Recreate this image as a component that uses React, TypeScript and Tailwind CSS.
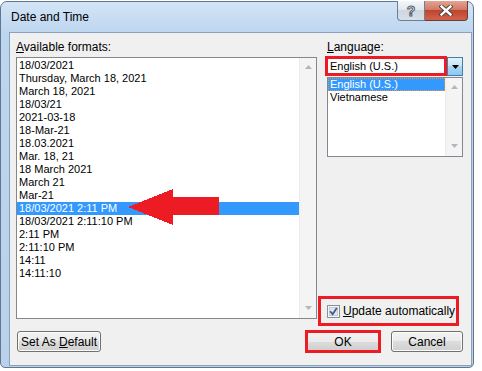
import React from "react";

const formats = [
  "18/03/2021",
  "Thursday, March 18, 2021",
  "March 18, 2021",
  "18/03/21",
  "2021-03-18",
  "18-Mar-21",
  "18.03.2021",
  "Mar. 18, 21",
  "18 March 2021",
  "March 21",
  "Mar-21",
  "18/03/2021 2:11 PM",
  "18/03/2021 2:11:10 PM",
  "2:11 PM",
  "2:11:10 PM",
  "14:11",
  "14:11:10",
];

function ScrollBar({ up, down }: { up: string; down: string }) {
  return (
    <div className="w-[17px] h-full bg-[#f4f4f4] border-l border-[#ececec] flex flex-col items-center justify-between">
      <div className={up}>
        <svg width="7" height="4" viewBox="0 0 7 4">
          <polygon points="0,4 7,4 3.5,0" fill="#b6b6b6" />
        </svg>
      </div>
      <div className={down}>
        <svg width="7" height="4" viewBox="0 0 7 4">
          <polygon points="0,0 7,0 3.5,4" fill="#b6b6b6" />
        </svg>
      </div>
    </div>
  );
}

function Btn({ children, w }: { children: React.ReactNode; w: string }) {
  return (
    <div
      className={`${w} h-[21px] rounded-[3px] border border-[#707070] bg-[linear-gradient(#f2f2f2,#ebebeb_50%,#dddddd_50%,#cfcfcf)] shadow-[inset_0_0_0_1px_#fbfbfb] flex items-center justify-center text-[12px] text-black`}
    >
      <span className="whitespace-pre">{children}</span>
    </div>
  );
}

export default function App() {
  return (
    <div className="w-[482px] h-[371px] bg-white pt-[1px] font-['Liberation_Sans',Arial,sans-serif] overflow-hidden">
      <div className="w-[474px] h-[367px] rounded-t-[7px] rounded-b-[5px] border border-[#62768e] bg-[linear-gradient(#d3e5f7,#bdd6ef_30px,#b9d1ea)] flex flex-col">
        {/* title bar */}
        <div className="h-[30px] flex items-start">
          <div className="pl-[10px] pt-[8px] text-[12px] leading-[15px] text-black">Date and Time</div>
          <div className="ml-auto mr-[5px] -mt-[1px] flex h-[20px]">
            <div className="w-[28px] h-full border border-[#6d7f94] border-t-0 rounded-bl-[4px] bg-[linear-gradient(#f4f7fa,#dfe6ee_50%,#cdd6e1_50%,#d8e0ea)] flex items-center justify-center">
              <span className="text-[14px] font-bold leading-none text-[#f4f4f4] [-webkit-text-stroke:1px_#59626c]">?</span>
            </div>
            <div className="w-[43px] h-full border border-[#6d3a34] border-t-0 border-l-0 rounded-br-[4px] bg-[linear-gradient(#e6a292,#d27a66_45%,#c0452f_50%,#d0624c)] flex items-center justify-center">
              <svg width="14" height="11" viewBox="0 0 14 11">
                <path d="M2.5 1.5 L11.5 9.5 M11.5 1.5 L2.5 9.5" stroke="#3c3c3c" strokeWidth="4.2" strokeLinecap="square" />
                <path d="M2.5 1.5 L11.5 9.5 M11.5 1.5 L2.5 9.5" stroke="#ffffff" strokeWidth="2.4" strokeLinecap="square" />
              </svg>
            </div>
          </div>
        </div>

        {/* client area */}
        <div className="ml-[8px] mr-[1px] mb-[1px] flex-1 border border-[#8ca1b9] bg-[#f0f0f0] flex flex-col text-black">
          <div className="h-[293px] pt-[7px] pl-[6px] flex">
            {/* left column */}
            <div className="w-[301px] flex flex-col">
              <div className="h-[14px] text-[12px] leading-[14px]">
                <span className="underline">A</span>vailable formats:
              </div>
              <div className="relative mt-[3px] h-[262px] border border-[#828790] bg-white flex">
                <div className="flex-1 pt-[1px] text-[11px]">
                  {formats.map((f, i) => (
                    <div
                      key={f}
                      className={`h-[13px] leading-[13px] pl-[2px] whitespace-nowrap ${i === 11 ? "bg-[#3399ff] text-white" : ""}`}
                    >
                      {f}
                    </div>
                  ))}
                </div>
                <ScrollBar up="mt-[7px]" down="mb-[8px]" />
                <svg className="absolute left-[111px] top-[131px]" width="92" height="37" viewBox="0 0 92 37" shapeRendering="crispEdges">
                  <polygon points="0,18 45,0 45,8 91,8 91,26 45,26 45,36" fill="#ed1c24" />
                </svg>
              </div>
            </div>

            {/* right column */}
            <div className="ml-[10px] w-[136px] flex flex-col">
              <div className="h-[14px] text-[12px] leading-[14px]">
                <span className="underline">L</span>anguage:
              </div>
              <div className="mt-[2px] -ml-[2px] flex h-[20px]">
                <div className="w-[123px] h-[20px] border-[3px] border-[#ed1c24] bg-white text-[11px] leading-[14px] pl-[2px]">
                  English (U.S.)
                </div>
                <div className="mt-[1px] w-[16px] h-[19px] border border-[#3c7fb1] bg-[linear-gradient(#e3f2fc,#c4e3f8_50%,#a9d6f5_50%,#8ec9ef)] flex items-center justify-center">
                  <svg width="7" height="4" viewBox="0 0 7 4">
                    <polygon points="0,0 7,0 3.5,4" fill="#000" />
                  </svg>
                </div>
              </div>
              <div className="mt-[1px] h-[80px] border border-[#828790] bg-white flex">
                <div className="flex-1 text-[11px]">
                  <div className="h-[13px] leading-[11px] pl-[1px] bg-[#3399ff] text-white border border-dotted border-[#e89a3c]">
                    English (U.S.)
                  </div>
                  <div className="h-[13px] leading-[13px] pl-[2px]">Vietnamese</div>
                </div>
                <ScrollBar up="mt-[7px]" down="mb-[8px]" />
              </div>
              <div className="flex-1" />
              <div className="-ml-[9px] w-[141px] h-[30px] border-[3px] border-[#ed1c24] flex items-center pl-[6px] gap-[3px]">
                <svg width="13" height="13" viewBox="0 0 13 13">
                  <rect x="0.5" y="0.5" width="12" height="12" fill="#f2f5f9" stroke="#8e8f8f" />
                  <rect x="2.5" y="2.5" width="8" height="8" fill="#dde5ee" stroke="#c4ccd6" />
                  <path d="M3.2 6.3 L5.6 9.3 L9.8 3" stroke="#3f5b94" strokeWidth="1.8" fill="none" />
                </svg>
                <span className="text-[12px] leading-[14px] whitespace-nowrap">
                  <span className="underline">U</span>pdate automatically
                </span>
              </div>
            </div>
          </div>

          {/* buttons */}
          <div className="mt-[5px] h-[21px] flex items-center">
            <div className="ml-[7px]">
              <Btn w="w-[84px]">
                Set As <span className="underline">D</span>efault
              </Btn>
            </div>
            <div className="ml-auto w-[76px] h-[23px] border-[3px] border-[#ed1c24] bg-[linear-gradient(#f2f2f2,#ebebeb_50%,#dddddd_50%,#cfcfcf)] flex items-center justify-center text-[12px]">
              OK
            </div>
            <div className="ml-[10px] mr-[8px]">
              <Btn w="w-[72px]">Cancel</Btn>
            </div>
          </div>
        </div>
      </div>
    </div>
  );
}
